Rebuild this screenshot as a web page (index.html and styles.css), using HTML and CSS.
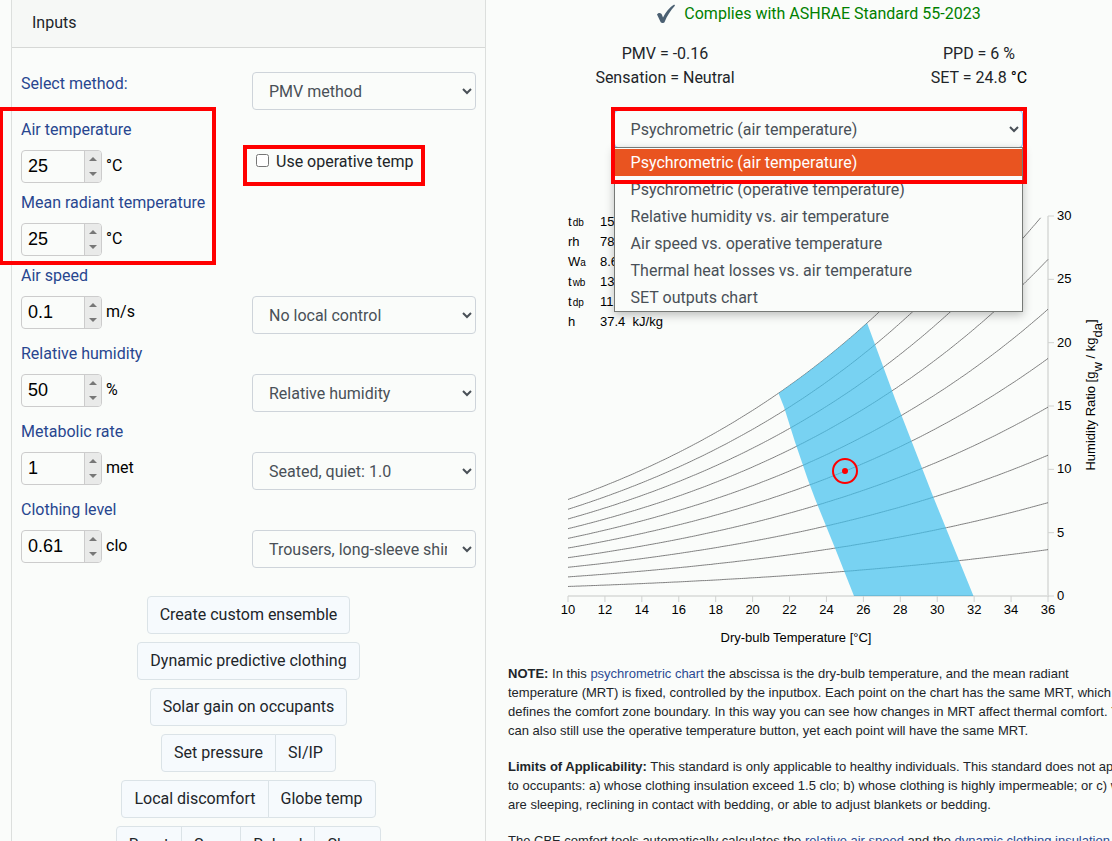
FILE: index.html
```html
<!DOCTYPE html>
<html lang="en">
<head>
<meta charset="utf-8">
<title>Thermal Comfort Tool</title>
<link rel="stylesheet" href="styles.css">
</head>
<body>
<main class="page">
  <section class="inputs">
    <h1 class="inputs-title">Inputs</h1>
    <form class="form">
      <div class="row">
        <label class="label" for="method">Select method:</label>
        <select class="select" id="method"><option>PMV method</option></select>
      </div>
      <div class="row">
        <div class="field">
          <label class="label" for="ta">Air temperature</label>
          <div class="measure"><span class="spinner"><input class="number" id="ta" type="text" value="25"><span class="arrows"><button type="button" class="up" aria-label="Increase"></button><button type="button" class="down" aria-label="Decrease"></button></span></span><span>°C</span></div>
        </div>
        <div class="option">
          <label class="check"><input class="box" type="checkbox">Use operative temp</label>
          <div class="mark mark-check"></div>
        </div>
        <div class="mark mark-temps"></div>
      </div>
      <div class="row">
        <div class="field">
          <label class="label" for="tr">Mean radiant temperature</label>
          <div class="measure"><span class="spinner"><input class="number" id="tr" type="text" value="25"><span class="arrows"><button type="button" class="up" aria-label="Increase"></button><button type="button" class="down" aria-label="Decrease"></button></span></span><span>°C</span></div>
        </div>
      </div>
      <div class="row">
        <div class="field">
          <label class="label" for="vel">Air speed</label>
          <div class="measure"><span class="spinner"><input class="number" id="vel" type="text" value="0.1"><span class="arrows"><button type="button" class="up" aria-label="Increase"></button><button type="button" class="down" aria-label="Decrease"></button></span></span><span>m/s</span></div>
        </div>
        <div class="option"><select class="select" aria-label="Air speed control"><option>No local control</option></select></div>
      </div>
      <div class="row">
        <div class="field">
          <label class="label" for="rh">Relative humidity</label>
          <div class="measure"><span class="spinner"><input class="number" id="rh" type="text" value="50"><span class="arrows"><button type="button" class="up" aria-label="Increase"></button><button type="button" class="down" aria-label="Decrease"></button></span></span><span>%</span></div>
        </div>
        <div class="option"><select class="select" aria-label="Humidity measure"><option>Relative humidity</option></select></div>
      </div>
      <div class="row">
        <div class="field">
          <label class="label" for="met">Metabolic rate</label>
          <div class="measure"><span class="spinner"><input class="number" id="met" type="text" value="1"><span class="arrows"><button type="button" class="up" aria-label="Increase"></button><button type="button" class="down" aria-label="Decrease"></button></span></span><span>met</span></div>
        </div>
        <div class="option"><select class="select" aria-label="Activity"><option>Seated, quiet: 1.0</option></select></div>
      </div>
      <div class="row">
        <div class="field">
          <label class="label" for="clo">Clothing level</label>
          <div class="measure"><span class="spinner"><input class="number" id="clo" type="text" value="0.61"><span class="arrows"><button type="button" class="up" aria-label="Increase"></button><button type="button" class="down" aria-label="Decrease"></button></span></span><span>clo</span></div>
        </div>
        <div class="option"><select class="select" aria-label="Ensemble"><option>Trousers, long-sleeve shirt: 0.61</option></select></div>
      </div>
    </form>
    <div class="actions">
      <div class="group"><button class="btn" type="button">Create custom ensemble</button></div>
      <div class="group"><button class="btn" type="button">Dynamic predictive clothing</button></div>
      <div class="group"><button class="btn" type="button">Solar gain on occupants</button></div>
      <div class="group"><button class="btn" type="button">Set pressure</button><button class="btn" type="button">SI/IP</button></div>
      <div class="group"><button class="btn" type="button">Local discomfort</button><button class="btn" type="button">Globe temp</button></div>
      <div class="group"><button class="btn" type="button">Reset</button><button class="btn" type="button">Save</button><button class="btn" type="button">Reload</button><button class="btn" type="button">Share</button></div>
    </div>
  </section>

  <section class="results">
    <p class="compliance">
      <svg class="tick" width="20" height="20" viewBox="0 0 20 20" aria-hidden="true"><path d="M1 10.5C1.500 9 4 8.500 5 9.500C6 10.500 6.500 12 7 13.500C9.500 8.500 13.500 3.500 17.500 1C18.500 .600 19.300 1.200 18.700 2C14.500 6.500 11 12 8.600 18C8.200 19.200 5.400 19.500 4.700 18.300C3.600 16 2.600 13.500 1 10.500Z" fill="#4b6072"/></svg>
      <span>Complies with ASHRAE Standard 55-2023</span>
    </p>
    <div class="metrics">
      <div>PMV = -0.16<br>Sensation = Neutral</div>
      <div>PPD = 6 %<br>SET = 24.8 <span class="unit">°C</span></div>
    </div>
    <div class="chart-picker">
      <select class="select select-open" aria-label="Chart type"><option>Psychrometric (air temperature)</option></select>
      <ul class="menu" role="listbox" aria-label="Chart types">
        <li class="item item-active" role="option" aria-selected="true">Psychrometric (air temperature)</li>
        <li class="item" role="option">Psychrometric (operative temperature)</li>
        <li class="item" role="option">Relative humidity vs. air temperature</li>
        <li class="item" role="option">Air speed vs. operative temperature</li>
        <li class="item" role="option">Thermal heat losses vs. air temperature</li>
        <li class="item" role="option">SET outputs chart</li>
      </ul>
      <div class="mark mark-picker"></div>
    </div>

    <svg class="chart" viewBox="0 0 621 450" role="img" aria-label="Psychrometric chart">
      <g id="curves" class="curves"></g>
      <path id="zone" class="zone"/>
      <g id="axes"></g>
      <circle class="ring" cx="337" cy="271" r="12"/>
      <circle class="dot" cx="337" cy="271" r="3"/>
      <text x="288" y="442" text-anchor="middle">Dry-bulb Temperature [°C]</text>
      <text transform="translate(587 195) rotate(-90)" text-anchor="middle">Humidity Ratio [g<tspan dy="7">w</tspan><tspan dy="-7"> / kg</tspan><tspan dy="7">da</tspan><tspan dy="-7">]</tspan></text>
      <g>
        <text x="60" y="26">t<tspan class="sub" dx="1">db</tspan></text><text x="92" y="26">15.5&#160; °C</text>
        <text x="60" y="46">rh</text><text x="92" y="46">78.4&#160; %</text>
        <text x="60" y="66">W<tspan class="sub">a</tspan></text><text x="92" y="66">8.6&#160; g/kg</text>
        <text x="60" y="86">t<tspan class="sub" dx="1">wb</tspan></text><text x="92" y="86">13.2&#160; °C</text>
        <text x="60" y="106">t<tspan class="sub" dx="1">dp</tspan></text><text x="92" y="106">11.8&#160; °C</text>
        <text x="60" y="126">h</text><text x="92" y="126">37.4&#160; kJ/kg</text>
      </g>
    </svg>

    <div class="notes">
      <p><strong>NOTE:</strong> In this <a href="#psychrometric">psychrometric chart</a> the abscissa is the dry-bulb temperature, and the mean radiant temperature (MRT) is fixed, controlled by the inputbox. Each point on the chart has the same MRT, which defines the comfort zone boundary. In this way you can see how changes in MRT affect thermal comfort. You can also still use the operative temperature button, yet each point will have the same MRT.</p>
      <p><strong>Limits of Applicability:</strong> This standard is only applicable to healthy individuals. This standard does not apply to occupants: a) whose clothing insulation exceed 1.5 clo; b) whose clothing is highly impermeable; or c) who are sleeping, reclining in contact with bedding, or able to adjust blankets or bedding.</p>
      <p>The CBE comfort tools automatically calculates the <a href="#speed">relative air speed</a> and the <a href="#clothing">dynamic clothing insulation</a>.</p>
    </div>
  </section>
</main>
<script src="chart.js"></script>
</body>
</html>
```

FILE: styles.css
```css
*, *::before, *::after { box-sizing: border-box; }

body {
  margin: 0;
  height: 100vh;
  overflow: hidden;
  background: #fafcfa;
  color: #212529;
  font: 16px/24px Roboto, "Liberation Sans", sans-serif;
}

.page {
  display: grid;
  grid-template-columns: 5fr 7fr;
  min-width: 1140px;
  margin-left: 11px;
}

/* Inputs card */
.inputs { border: 1px solid #dcdfdd; border-top: 0; }
.inputs-title {
  margin: 0;
  padding: 11px 20px 12px;
  border-bottom: 1px solid #d6d8d6;
  background: #f6f8f6;
  font-size: 16px;
  font-weight: 400;
}
.form { padding: 24px 9px 0; }
.row {
  position: relative;
  display: grid;
  grid-template-columns: 231px 1fr;
  align-items: start;
  padding-bottom: 7px;
}
.label { display: block; color: #28468f; }
.field .label { padding-top: 1px; margin-bottom: 8px; }
.option { position: relative; padding-top: 33px; }

.measure { display: flex; gap: 4px; color: #000; line-height: 32px; }
.spinner {
  display: flex;
  width: 81px;
  height: 33px;
  overflow: hidden;
  border: 1px solid #ccc;
  border-radius: 4px;
}
.number {
  flex: 1;
  min-width: 0;
  padding: 0 6px 2px;
  border: 0;
  background: transparent;
  color: #000;
  font: 18px/28px "Liberation Sans", Arial, sans-serif;
}
.arrows {
  display: flex;
  flex-direction: column;
  width: 17px;
  border-left: 1px solid #ccc;
  background: #e9eae9;
}
.up, .down {
  display: grid;
  flex: 1;
  place-items: center;
  padding: 0;
  border: 0;
  background: transparent;
}
.up::before, .down::before {
  content: "";
  border: 4px solid transparent;
}
.up::before { border-top: 0; border-bottom-color: #777; }
.down::before { border-bottom: 0; border-top-color: #777; }

.select {
  display: block;
  width: 100%;
  height: 38px;
  padding: 6px 12px;
  border: 1px solid #ced4da;
  border-radius: 4px;
  background: #fafcfa;
  color: #495057;
  font: 16px/24px Roboto, sans-serif;
}
.check { display: flex; align-items: center; line-height: 24px; }
.box { width: 13px; height: 13px; margin: 0 7px 4px 4px; }

.actions {
  display: flex;
  flex-direction: column;
  align-items: center;
  gap: 8px;
  padding: 21px 0;
}
.group { display: flex; }
.btn {
  height: 38px;
  padding: 0 12px;
  border: 1px solid #dbe3e7;
  background: #f6fafd;
  color: #212529;
  font: 16px/24px Roboto, sans-serif;
}
.btn + .btn { margin-left: -1px; }
.btn:first-child { border-top-left-radius: 4px; border-bottom-left-radius: 4px; }
.btn:last-child { border-top-right-radius: 4px; border-bottom-right-radius: 4px; }

/* Results column */
.results { padding: 2px 22px 0; }
.compliance {
  display: flex;
  justify-content: center;
  gap: 8px;
  margin: 0 0 16px;
  color: #008000;
}
.tick { margin-top: 2px; }
.metrics {
  display: grid;
  grid-template-columns: 1fr 1fr;
  margin-right: -7px;
  margin-bottom: 20px;
  text-align: center;
}
.unit { color: #000; }
.chart-picker { position: relative; width: 66%; margin: 0 auto 52px; }
.select-open { border-color: #80bdff; }
.menu {
  position: absolute;
  top: 37px;
  left: 0;
  right: 0;
  z-index: 1;
  margin: 0;
  padding: 1px 0 0;
  border: 1px solid #767976;
  background: #fafcfa;
  box-shadow: 0 3px 9px rgba(0, 0, 0, .25);
  color: #495057;
  list-style: none;
}
.item { padding: 0 16px; line-height: 27px; }
.item-active { background: #e95420; color: #fff; }

/* Highlight frames laid over the controls */
.mark {
  position: absolute;
  z-index: 2;
  border: 4px solid #f00;
  pointer-events: none;
}
.mark-temps { top: -10px; left: -22px; width: 217px; height: 158px; }
.mark-check { top: 28px; left: -9px; width: 182px; height: 41px; }
.mark-picker { top: -3px; left: -3px; right: -4px; height: 77px; }

.chart { display: block; width: 100%; font: 13px "Liberation Sans", Arial, sans-serif; }
.sub { font-size: 10px; }
.curves path { fill: none; stroke: #808080; }
.zone { fill: #40c0ee; fill-opacity: .7; }
.axis { fill: none; stroke: #000; stroke-opacity: .1; stroke-width: 2; }
.gridtick { stroke: #d0d2d0; }
.ring { fill: none; stroke: #f00; stroke-width: 2; }
.dot { fill: #f00; }

.notes { margin: 14px -11px 0 0; font: 13px/19px "Liberation Sans", Arial, sans-serif; }
.notes p { margin: 0 0 17px; }
.notes a { color: #2b4a94; text-decoration: none; }
```

FILE: chart.js
```js
const NS = "http://www.w3.org/2000/svg";
const px = t => 60 + (t - 10) * 480 / 26;
const py = w => 396 - w * 380 / 30;

function add(parent, name, attrs, text) {
  const el = document.createElementNS(NS, name);
  for (const key in attrs) el.setAttribute(key, attrs[key]);
  if (text !== undefined) el.textContent = text;
  parent.appendChild(el);
}

// Humidity ratio (g/kg) from temperature and relative humidity
function ratio(t, rh) {
  const p = rh * 611.2 * Math.exp(17.62 * t / (243.12 + t));
  return 622 * p / (101325 - p);
}

function line(rh, from, to) {
  const pts = [];
  for (let t = from; t <= to + 0.001; t += 0.1) {
    const w = ratio(t, rh);
    if (w <= 30) pts.push(px(t).toFixed(1) + " " + py(w).toFixed(1));
  }
  return pts.join("L");
}

const curves = document.getElementById("curves");
for (let i = 1; i <= 10; i++) add(curves, "path", { d: "M" + line(i / 10, 10, 36) });

document.getElementById("zone").setAttribute("d",
  "M" + line(1, 21.4, 26.2) + "L387.500 200L424.500 295L465.500 396H346L327 348L307.500 300L300 280L287 242L276 207Z");

const axes = document.getElementById("axes");
add(axes, "path", { class: "axis", d: "M60 396H540V16" });
for (let t = 10; t <= 36; t += 2) {
  add(axes, "path", { class: "gridtick", d: `M${px(t)} 396v6` });
  add(axes, "text", { x: px(t), y: 414, "text-anchor": "middle" }, t);
}
for (let w = 0; w <= 30; w += 5) {
  add(axes, "path", { class: "gridtick", d: `M540 ${py(w)}h6` });
  add(axes, "text", { x: 549, y: py(w) + 4 }, w);
}
```
